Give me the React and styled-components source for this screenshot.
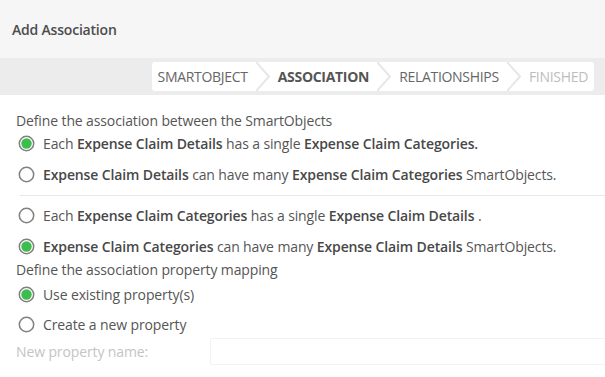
import React from "react";
import styled, { createGlobalStyle } from "styled-components";

const Global = createGlobalStyle`
  html, body { margin: 0; padding: 0; background: #fff; }
  body { font-family: "Open Sans", "Liberation Sans", sans-serif; color: #555; }
`;

const Page = styled.div`
  width: 605px;
  display: flex;
  flex-direction: column;
`;

const Header = styled.div`
  height: 58px;
  background: #f6f6f6;
  display: flex;
  align-items: center;
  padding-left: 12px;
  font-size: 14px;
  letter-spacing: -0.2px;
  font-weight: 600;
  color: #4d4d4d;
  box-sizing: border-box;
`;

const Band = styled.div`
  height: 37px;
  background: #ececec;
  display: flex;
  align-items: center;
  justify-content: flex-end;
  padding-right: 11px;
`;

const Steps = styled.div`
  height: 29px;
  background: #fff;
  border-radius: 3px;
  display: flex;
  align-items: stretch;
  padding: 0 6px;
`;

const Step = styled.div`
  display: flex;
  align-items: center;
  font-size: 14px;
  letter-spacing: -0.3px;
  text-transform: uppercase;
  font-weight: ${(p) => (p.$active ? 700 : 400)};
  color: ${(p) => (p.$active ? "#555" : p.$muted ? "#bdbdbd" : "#666")};
`;

const Chevron = styled.svg`
  width: 14px;
  height: 29px;
  margin: 0 8px;
  flex: none;
`;

const Content = styled.div`
  padding: 15px 0 0 16px;
  display: flex;
  flex-direction: column;
  font-size: 14px;
  letter-spacing: -0.12px;
`;

const Label = styled.div`
  height: 21px;
  line-height: 21px;
  color: #555;
  margin-top: ${(p) => p.$mt || 0}px;
`;

const Row = styled.label`
  display: flex;
  align-items: center;
  gap: 8px;
  height: 31px;
  padding-left: 2px;
  color: #555;
  margin-top: ${(p) => p.$mt || 0}px;
  b { font-weight: 600; color: #484848; }
`;

const Divider = styled.div`
  height: 1px;
  background: #e8e8e8;
  margin: 5px 0 4px 4px;
`;

const InputRow = styled.div`
  display: flex;
  align-items: center;
  height: 27px;
  margin-top: -2px;
`;

const InputLabel = styled.div`
  width: 194px;
  color: #c4c4c4;
`;

const Input = styled.div`
  flex: 1;
  height: 25px;
  border: 1px solid #f2f2f2;
  border-right: none;
  border-radius: 2px 0 0 2px;
`;

const Radio = ({ checked }) => (
  <svg width="17" height="17" viewBox="0 0 17 17">
    <circle cx="8.5" cy="8.5" r="7.2" fill="#fff" stroke="#808080" strokeWidth="1.5" />
    {checked && <circle cx="8.5" cy="8.5" r="5.2" fill="#3cbd4c" />}
  </svg>
);

const Sep = () => (
  <Chevron viewBox="0 0 14 29">
    <polyline points="0,0 13,14.5 0,29" fill="none" stroke="#e7e7e7" strokeWidth="2" />
  </Chevron>
);

export default function App() {
  return (
    <Page>
      <Global />
      <Header>Add Association</Header>
      <Band>
        <Steps>
          <Step>SmartObject</Step>
          <Sep />
          <Step $active>Association</Step>
          <Sep />
          <Step>Relationships</Step>
          <Sep />
          <Step $muted>Finished</Step>
        </Steps>
      </Band>
      <Content>
        <Label>Define the association between the SmartObjects</Label>
        <Row $mt={-3}>
          <Radio checked />
          <span>Each <b>Expense Claim Details</b> has a single <b>Expense Claim Categories.</b></span>
        </Row>
        <Row>
          <Radio />
          <span><b>Expense Claim Details</b> can have many <b>Expense Claim Categories</b> SmartObjects.</span>
        </Row>
        <Divider />
        <Row>
          <Radio />
          <span>Each <b>Expense Claim Categories</b> has a single <b>Expense Claim Details</b> .</span>
        </Row>
        <Row>
          <Radio checked />
          <span><b>Expense Claim Categories</b> can have many <b>Expense Claim Details</b> SmartObjects.</span>
        </Row>
        <Label $mt={-3}>Define the association property mapping</Label>
        <Row $mt={-1}>
          <Radio checked />
          <span>Use existing property(s)</span>
        </Row>
        <Row $mt={-1}>
          <Radio />
          <span>Create a new property</span>
        </Row>
        <InputRow>
          <InputLabel>New property name:</InputLabel>
          <Input />
        </InputRow>
      </Content>
    </Page>
  );
}
